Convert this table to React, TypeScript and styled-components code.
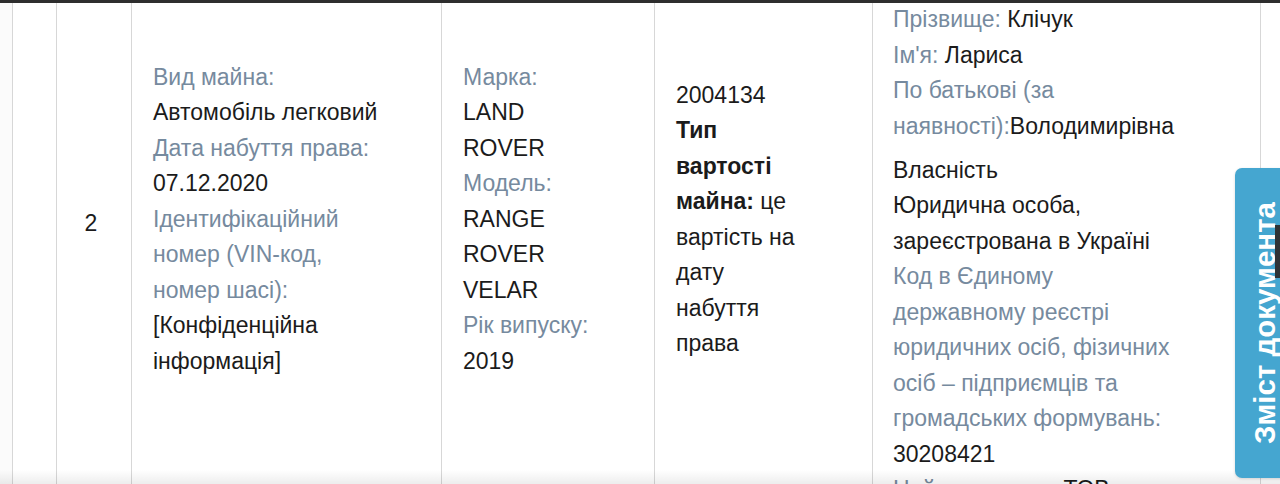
import React from "react";
import styled, { createGlobalStyle } from "styled-components";

const Global = createGlobalStyle`
  html, body { margin: 0; padding: 0; background: #ffffff; }
  body { width: 1280px; height: 484px; overflow: hidden; font-family: "Liberation Sans", Arial, sans-serif; }
`;

const Page = styled.div`
  position: relative;
  width: 1280px;
  height: 484px;
  overflow: hidden;
  background: #fff;
`;

const TopBar = styled.div`
  height: 3px;
  background: #2e2e2e;
`;

const Viewport = styled.div`
  height: 481px;
  overflow: hidden;
`;

const Row = styled.div`
  display: grid;
  grid-template-columns: 12px 44px 75px 310px 213px 218px 388px 20px;
  height: 600px;
  margin-top: -83.5px;
  font-size: 23px;
  line-height: 35.5px;
  color: #1b1b1b;
`;

const Cell = styled.div<{ $edge?: boolean; $top?: number; $center?: boolean }>`
  display: flex;
  flex-direction: column;
  justify-content: ${(p) => (p.$top !== undefined ? "flex-start" : "center")};
  align-items: ${(p) => (p.$center ? "center" : "flex-start")};
  padding: ${(p) =>
    p.$top !== undefined ? `${p.$top}px 20px 0 20px` : p.$center ? "0 6px 0 0" : "0 20px 0 21px"};
  border-left: ${(p) => (p.$edge ? "1.5px solid #d7d7d7" : "none")};
  white-space: nowrap;
  min-width: 0;
  overflow: hidden;
`;

const Gutter = styled.div<{ $bg?: string }>`
  background: ${(p) => p.$bg || "#fff"};
`;

const Block = styled.div<{ $gap?: number }>`
  margin-top: ${(p) => p.$gap || 0}px;
`;

const Label = styled.span`
  color: #768a9e;
`;

const Value = styled.span`
  color: #1b1b1b;
`;

const Strong = styled.b`
  font-weight: 700;
  color: #1b1b1b;
`;

const RowNumber = styled.span`
  color: #1b1b1b;
  margin-top: 8px;
`;

const BottomShade = styled.div`
  position: absolute;
  left: 0;
  right: 0;
  bottom: 0;
  height: 14px;
  background: linear-gradient(to bottom, rgba(0, 0, 0, 0), rgba(0, 0, 0, 0.07));
  pointer-events: none;
`;

const SideTab = styled.div`
  position: absolute;
  left: 1235px;
  top: 168px;
  width: 60px;
  height: 310px;
  border-radius: 7px 0 0 7px;
  background: #45a6d0;
  box-shadow: 0 1px 3px rgba(0, 0, 0, 0.15);
  display: flex;
  align-items: center;
  justify-content: center;
`;

const TabText = styled.span`
  writing-mode: vertical-rl;
  transform: rotate(180deg);
  color: #ffffff;
  font-family: "Liberation Sans", Arial, sans-serif;
  font-weight: 700;
  font-size: 29.5px;
  line-height: 1;
  white-space: nowrap;
`;

const TabMark = styled.span`
  position: absolute;
  left: 40px;
  top: 57px;
  width: 6px;
  height: 53px;
  background: #2f3336;
`;

export default function App() {
  return (
    <Page>
      <Global />
      <TopBar />
      <Viewport>
        <Row>
          <Gutter $bg="#fbfbfb" />
          <Cell $edge />
          <Cell $edge $center>
            <RowNumber>2</RowNumber>
          </Cell>
          <Cell $edge>
            <Label>Вид майна:</Label>
            <Value>Автомобіль легковий</Value>
            <Label>Дата набуття права:</Label>
            <Value>07.12.2020</Value>
            <Label>Ідентифікаційний</Label>
            <Label>номер (VIN-код,</Label>
            <Label>номер шасі):</Label>
            <Value>[Конфіденційна</Value>
            <Value>інформація]</Value>
          </Cell>
          <Cell $edge>
            <Label>Марка:</Label>
            <Value>LAND</Value>
            <Value>ROVER</Value>
            <Label>Модель:</Label>
            <Value>RANGE</Value>
            <Value>ROVER</Value>
            <Value>VELAR</Value>
            <Label>Рік випуску:</Label>
            <Value>2019</Value>
          </Cell>
          <Cell $edge>
            <Block>
              <div>2004134</div>
              <div><Strong>Тип</Strong></div>
              <div><Strong>вартості</Strong></div>
              <div><Strong>майна:</Strong> це</div>
              <div>вартість на</div>
              <div>дату</div>
              <div>набуття</div>
              <div>права</div>
            </Block>
          </Cell>
          <Cell $edge $top={82.5}>
            <Block>
              <div><Label>Прізвище:</Label> <Value>Клічук</Value></div>
              <div><Label>Ім'я:</Label> <Value>Лариса</Value></div>
              <div><Label>По батькові (за</Label></div>
              <div><Label>наявності):</Label><Value>Володимирівна</Value></div>
            </Block>
            <Block $gap={8.5}>
              <div><Value>Власність</Value></div>
              <div><Value>Юридична особа,</Value></div>
              <div><Value>зареєстрована в Україні</Value></div>
              <div><Label>Код в Єдиному</Label></div>
              <div><Label>державному реєстрі</Label></div>
              <div><Label>юридичних осіб, фізичних</Label></div>
              <div><Label>осіб – підприємців та</Label></div>
              <div><Label>громадських формувань:</Label></div>
              <div><Value>30208421</Value></div>
              <div><Label>Найменування:</Label> <Value>ТОВ</Value></div>
              <div><Value>«ВЕСТА»</Value></div>
            </Block>
          </Cell>
          <Cell $edge />
        </Row>
      </Viewport>
      <BottomShade />
      <SideTab>
        <TabText>Зміст документа</TabText>
        <TabMark />
      </SideTab>
    </Page>
  );
}
